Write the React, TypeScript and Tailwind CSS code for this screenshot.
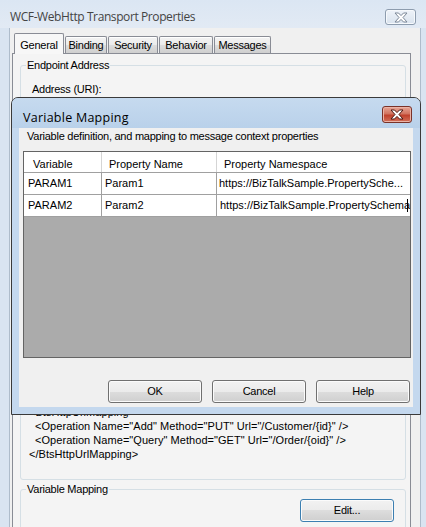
import type { ReactNode } from "react"

const btnFace =
  "bg-[linear-gradient(#f2f2f2,#ebebeb_50%,#dddddd_50%,#cfcfcf)] shadow-[inset_0_0_0_1px_#fbfbfb]"

function CloseGlyph({ stroke }: { stroke: string }) {
  return (
    <svg width="14" height="11" viewBox="0 0 14 11">
      <polygon
        points="1,1 4.5,1 7,3.6 9.5,1 13,1 9,5.5 13,10 9.5,10 7,7.4 4.5,10 1,10 5,5.5"
        fill="#ffffff"
        stroke={stroke}
        strokeWidth="1"
        strokeLinejoin="round"
      />
    </svg>
  )
}

function Button({ children, focused }: { children: ReactNode; focused?: boolean }) {
  return (
    <div
      className={`flex h-[23px] w-[94px] items-center justify-center rounded-[3px] border ${btnFace} ${
        focused ? "border-[#3c7fb1] shadow-[inset_0_0_0_1px_#c6ecfc]" : "border-[#707070]"
      }`}
    >
      {children}
    </div>
  )
}

function Tab({ label, width, selected }: { label: string; width: string; selected?: boolean }) {
  if (selected) {
    return (
      <div
        className={`relative z-10 -mb-px flex h-[21px] items-start justify-center rounded-t-[2px] border border-b-0 border-[#898c95] bg-[#f7f7f7] pt-[3px] ${width}`}
      >
        {label}
      </div>
    )
  }
  return (
    <div
      className={`flex h-[17px] items-center justify-center rounded-t-[2px] border border-b-0 border-[#898c95] bg-[linear-gradient(#f3f3f3,#ebebeb_50%,#dddddd_50%,#cfcfcf)] pt-[1px] shadow-[inset_0_1px_0_#fff] ${width}`}
    >
      {label}
    </div>
  )
}

function GroupBox({ label, className, children }: { label: string; className?: string; children?: ReactNode }) {
  return (
    <div className={`relative rounded-[3px] border border-[#d5dfe5] ${className ?? ""}`}>
      <span className="absolute -top-[8px] left-[5px] bg-[#f4f4f4] px-[1px] leading-[14px]">{label}</span>
      {children}
    </div>
  )
}

export default function App() {
  return (
    <div className="relative h-[527px] w-[426px] overflow-hidden bg-[#d9e4f1] font-['Liberation_Sans',Arial,sans-serif] text-[11px] tracking-[-0.25px] text-black">
      {/* outer window title bar */}
      <div className="flex h-[28px] items-start bg-[linear-gradient(#dbe6f3,#e2eaf4)]">
        <div className="pl-[10px] pt-[8px] font-['Open_Sans',sans-serif] text-[12px] leading-[17px] tracking-[-0.4px] text-[#444]">
          WCF-WebHttp Transport Properties
        </div>
        <div className="ml-auto mr-[10px] mt-[9px] flex h-[16px] w-[31px] items-center justify-center rounded-[3px] border border-[#8d9cae] bg-[linear-gradient(#eef3f9,#d9e3ee)] shadow-[inset_0_0_0_1px_#f6f9fc]">
          <CloseGlyph stroke="#7b8797" />
        </div>
      </div>

      {/* outer client area */}
      <div className="ml-[9px] mr-[5px] flex h-[499px] flex-col border-x border-[#aebccb] bg-[#f0f0f0] pl-[2px] pr-[9px] pt-[5px]">
        <div className="flex h-[20px] items-end gap-[1px] pl-[2px]">
          <Tab label="General" width="w-[50px]" selected />
          <Tab label="Binding" width="w-[42px]" />
          <Tab label="Security" width="w-[50px]" />
          <Tab label="Behavior" width="w-[54px]" />
          <Tab label="Messages" width="w-[57px]" />
        </div>
        <div className="flex-1 border border-[#898c95] bg-[#f4f4f4] pl-[7px] pr-[4px] pt-[11px]">
          <GroupBox label="Endpoint Address" className="flex h-[415px] flex-col">
            <div className="pl-[11px] pt-[16px] leading-[14px]">Address (URI):</div>
            <div className="mt-auto pb-[18px] pl-[8px] leading-[14px] tracking-[0.05px]">
              <div>&lt;BtsHttpUrlMapping&gt;</div>
              <div className="pl-[6px]">&lt;Operation Name="Add" Method="PUT" Url="/Customer/{"{id}"}" /&gt;</div>
              <div className="pl-[6px]">&lt;Operation Name="Query" Method="GET" Url="/Order/{"{oid}"}" /&gt;</div>
              <div>&lt;/BtsHttpUrlMapping&gt;</div>
            </div>
          </GroupBox>
          <GroupBox label="Variable Mapping" className="mt-[9px] h-[60px]">
            <div className="flex justify-end pr-[11px] pt-[9px]">
              <Button focused>Edit...</Button>
            </div>
          </GroupBox>
        </div>
      </div>

      {/* Variable Mapping dialog */}
      <div className="absolute left-[11px] top-[97px] flex h-[318px] w-[410px] flex-col rounded-t-[7px] border border-[#3a3a3a] bg-[#c4d8ee]">
        <div className="flex h-[30px] shrink-0 items-start rounded-t-[6px] bg-[linear-gradient(#c6daef,#b9d1ea)]">
          <div className="pl-[11px] pt-[12px] font-['Open_Sans',sans-serif] text-[12.5px] leading-[16px] tracking-[0.25px]">
            Variable Mapping
          </div>
          <div className="ml-auto mr-[8px] mt-[8px] flex h-[17px] w-[30px] items-center justify-center rounded-[3px] border border-[#7a3228] bg-[linear-gradient(#e8a595,#d1735f_45%,#c0412c_55%,#d2705a)] shadow-[inset_0_0_0_1px_#eab3a6]">
            <CloseGlyph stroke="#4a1710" />
          </div>
        </div>
        <div className="mx-[7px] flex h-[279px] flex-col bg-[#f0f0f0]">
          <div className="pl-[8px] pt-[2px] leading-[13px]">
            Variable definition, and mapping to message context properties
          </div>
          <div className="ml-[4px] mr-[2px] mt-[8px] flex h-[207px] flex-col border border-[#646464] bg-[#ababab] tracking-normal">
            <div className="flex h-[21px] border-b border-[#a0a0a0] bg-white">
              <div className="w-[78px] border-r border-[#d5d5d5] pl-[9px] pt-[4px]">Variable</div>
              <div className="w-[115px] border-r border-[#d5d5d5] pl-[7px] pt-[4px]">Property Name</div>
              <div className="flex-1 pl-[7px] pt-[4px]">Property Namespace</div>
            </div>
            <div className="flex h-[22px] border-b border-[#a0a0a0] bg-white">
              <div className="flex w-[78px] items-center border-r border-[#a0a0a0] pl-[4px]">PARAM1</div>
              <div className="flex w-[115px] items-center border-r border-[#a0a0a0] pl-[3px]">Param1</div>
              <div className="flex flex-1 items-center overflow-hidden whitespace-nowrap pl-[2px]">
                https://BizTalkSample.PropertySche...
              </div>
            </div>
            <div className="flex h-[22px] border-b border-[#a0a0a0] bg-white">
              <div className="flex w-[78px] items-center border-r border-[#a0a0a0] pl-[4px]">PARAM2</div>
              <div className="flex w-[115px] items-center border-r border-[#a0a0a0] pl-[3px]">Param2</div>
              <div className="relative flex flex-1 items-center overflow-hidden whitespace-nowrap pl-[3px]">
                https://BizTalkSample.PropertySchema
                <span className="absolute right-[2px] top-[4px] h-[13px] w-px bg-black" />
              </div>
            </div>
          </div>
          <div className="mt-[22px] flex justify-end gap-[10px] pr-[3px]">
            <Button>OK</Button>
            <Button>Cancel</Button>
            <Button>Help</Button>
          </div>
        </div>
      </div>
    </div>
  )
}
